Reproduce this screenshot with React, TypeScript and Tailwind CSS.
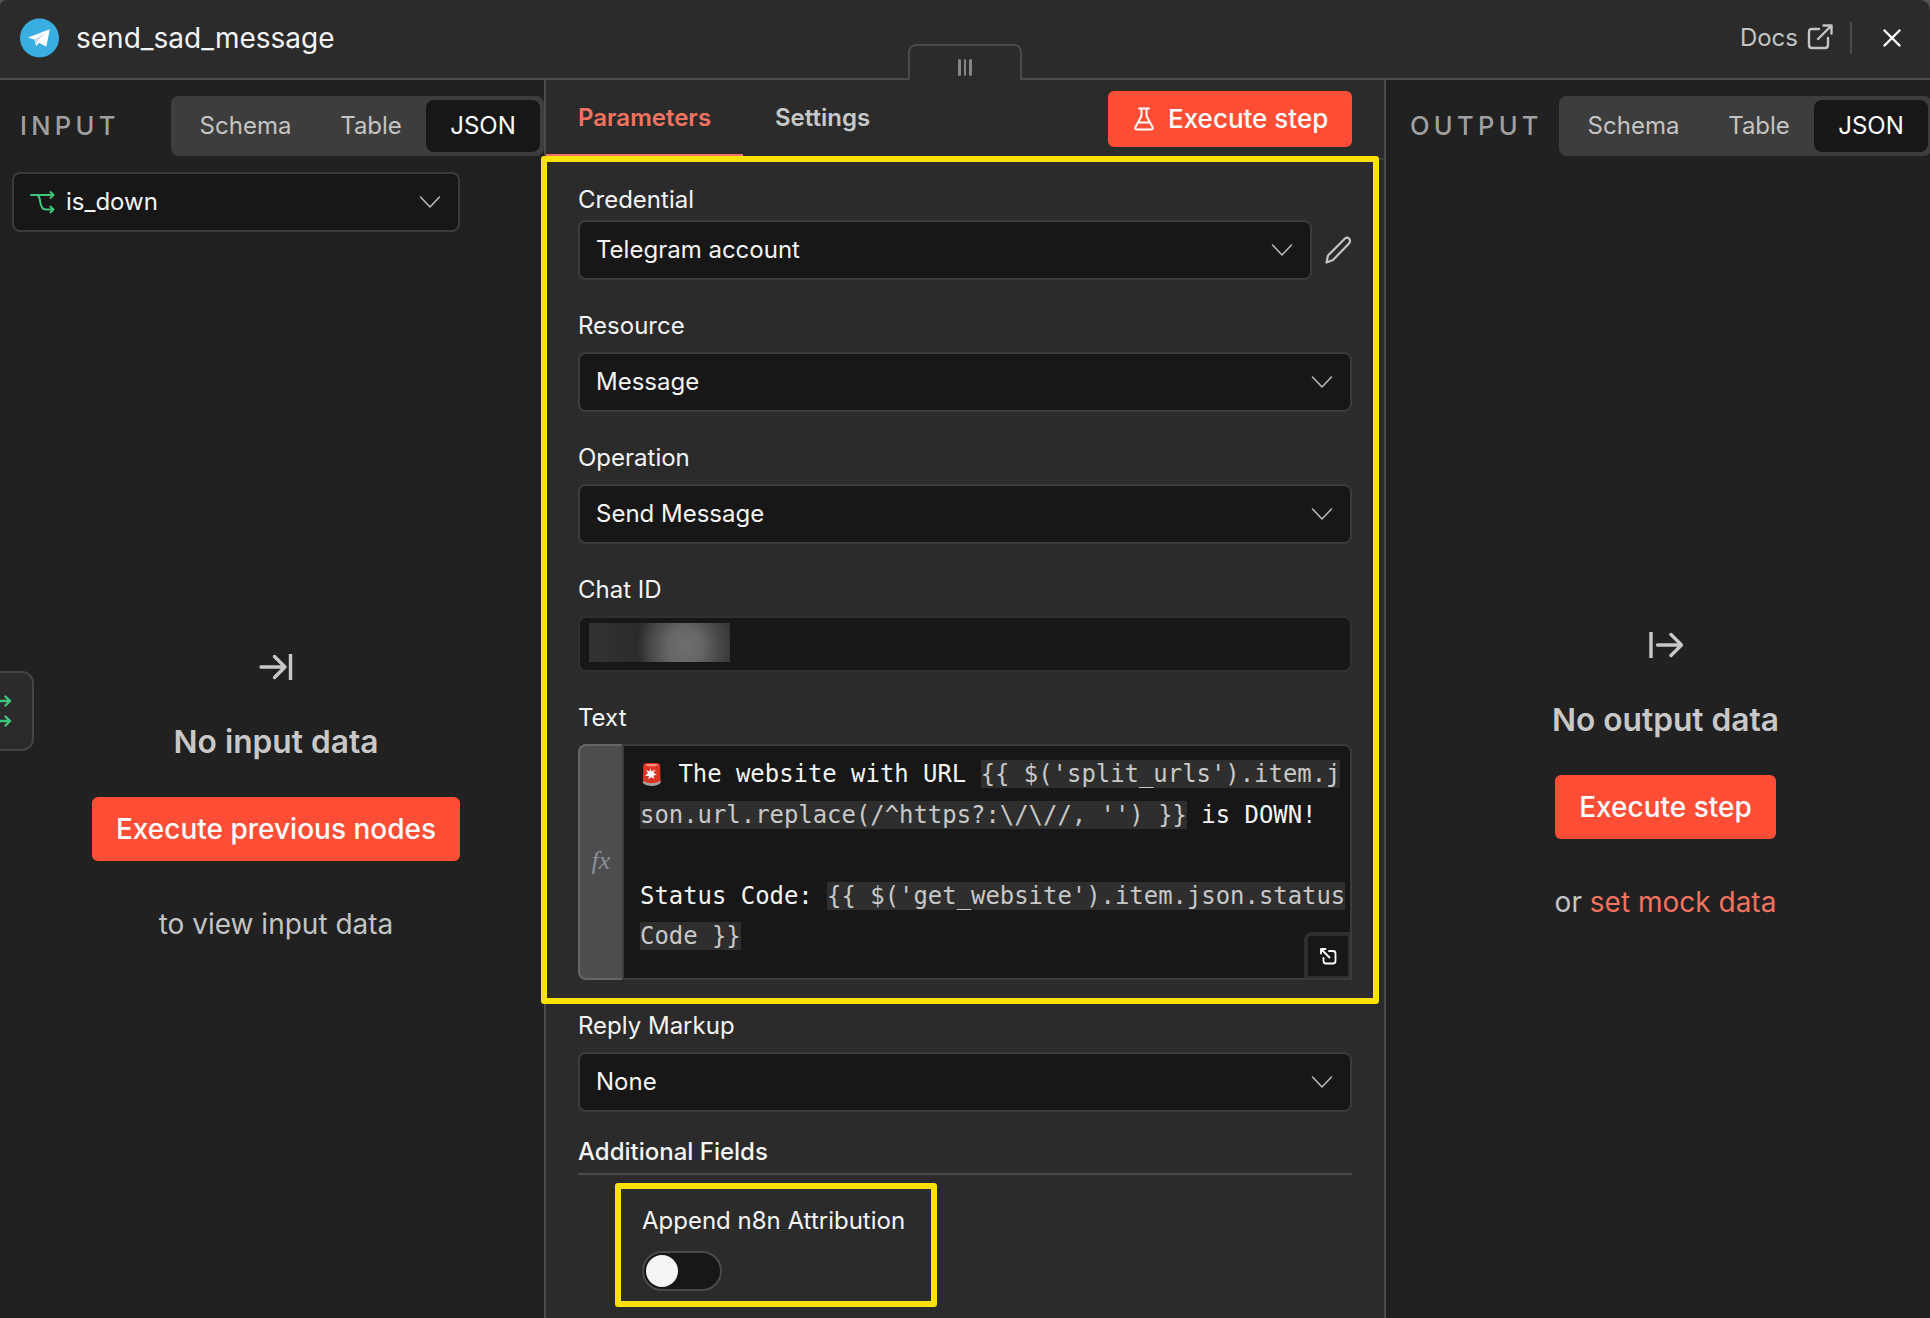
import React from "react";

const Chevron = () => (
  <svg className="shrink-0" width="22" height="14" viewBox="0 0 22 14" fill="none" stroke="#b8b8b8" strokeWidth="1.6" strokeLinecap="round" strokeLinejoin="round">
    <path d="M1.500 2 11 12l9.500-10" />
  </svg>
);

const Telegram = () => (
  <svg width="40" height="40" viewBox="0 0 40 40">
    <circle cx="19.500" cy="20" r="19.500" fill="#3aade1" />
    <path d="M8 19.500 29.800 11.200 26.300 28.800 19 24.800 16.200 28.200 14.500 21.800z" fill="#fff" />
    <path d="M14.500 21.800 26 14.200 17.300 23.300 16.200 28.200z" fill="#c9dcec" />
  </svg>
);

const Branch = () => (
  <svg width="25" height="24" viewBox="0 0 25 24" fill="none" stroke="#3dc67b" strokeWidth="2" strokeLinecap="round" strokeLinejoin="round">
    <path d="M1 5h22M20.500 2 23.500 5l-3 3M7 5c3.500 1 2.500 6 4 10 1 3.500 2.500 4.500 5 4.500h7M20.500 16.500l3 3-3 3" />
  </svg>
);

const Siren = () => (
  <svg className="inline-block align-[-4px]" width="24" height="24" viewBox="0 0 24 24">
    <path d="M3 18h17.500v3q-3 3-8.700 3T3 21z" fill="#a9a3a3" />
    <path d="M3.200 4q.3-3 4-3h9q3.700 0 4 3l.3 15q-8.700 4.500-17.500 0z" fill="#dd3324" />
    <path d="M5 3.500q1-1.500 3-1.500h7.500q2 0 3 1.500-6.500 1.800-13.500 0z" fill="#f48b78" />
    <path d="m10.500 6 1 3.500 4-2-2 3.500 3.500 1.500-3.700 1.200 1.200 3.300-3.500-2-2.500 2.500.3-3.600-3.800-.4 3-2.200-2-3.300 3.500 1.500z" fill="#fff" />
  </svg>
);

const Tabs = () => (
  <div className="flex h-[60px] w-[373px] shrink-0 rounded-lg bg-[#3d3d3d] p-1 text-[24px] text-[#c4c4c4]">
    <div className="flex w-[141px] items-center justify-center">Schema</div>
    <div className="flex w-[110px] items-center justify-center">Table</div>
    <div className="flex flex-1 items-center justify-center rounded-lg bg-[#171717] text-white">JSON</div>
  </div>
);

const Select = ({ value }: { value: string }) => (
  <div className="flex h-[60px] flex-1 items-center justify-between rounded-lg border-2 border-[#3b3b3b] bg-[#171717] pl-4 pr-[17px]">
    <span>{value}</span>
    <Chevron />
  </div>
);

const Label = ({ children }: { children: string }) => (
  <div className="h-8 leading-8 text-[#f5f5f5]">{children}</div>
);

const Code = ({ children }: { children: string }) => (
  <span className="bg-[#2e2e2e] text-[#c8c8c8]">{children}</span>
);

const App = () => {
  return (
    <div className="flex h-[1318px] w-[1930px] flex-col overflow-hidden bg-[#212121] font-['Inter',sans-serif] text-[24px] text-[#f5f5f5]">
      <div className="h-20 shrink-0 bg-[#555]">
        <header className="relative flex h-20 items-center rounded-tl-[6px] rounded-tr-[10px] border-b-2 border-[#4a4a4a] bg-[#2b2b2b] pb-[2px] pl-5 pr-[29px]">
          <Telegram />
          <h1 className="ml-4 flex-1 text-[28px] text-[#f5f5f5]">send_sad_message</h1>
          <span className="text-[24px] text-[#c4c4c4]">Docs</span>
          <svg className="-mt-[3px] ml-[9px]" width="26" height="26" viewBox="0 0 26 26" fill="none" stroke="#c4c4c4" strokeWidth="2.400" strokeLinecap="round" strokeLinejoin="round">
            <path d="M12 5H5q-3 0-3 3v13q0 3 3 3h13q3 0 3-3v-7M16.500 1.500h8v8M24.500 1.500 11 15" />
          </svg>
          <div className="ml-[17px] mr-[1px] h-8 w-[2px] bg-[#4a4a4a]" />
          <svg className="ml-[30px]" width="18" height="18" viewBox="0 0 18 18" fill="none" stroke="#fff" strokeWidth="2.400" strokeLinecap="round">
            <path d="m1.500 1.500 15 15M16.500 1.500l-15 15" />
          </svg>
          {/* drag handle over the header border */}
          <div className="absolute left-[908px] top-11 flex h-[37px] w-[114px] justify-center gap-[3px] rounded-t-lg border-2 border-b-0 border-[#4a4a4a] bg-[#2b2b2b] pt-[13px]">
            <div className="h-[17px] w-[2.500px] rounded bg-[#858585]" />
            <div className="h-[17px] w-[2.500px] rounded bg-[#858585]" />
            <div className="h-[17px] w-[2.500px] rounded bg-[#858585]" />
          </div>
        </header>
      </div>
      <main className="flex flex-1">
        <section className="relative flex w-[544px] shrink-0 flex-col pt-4">
          <div className="flex items-center justify-between">
            <span className="pl-5 text-[25.500px] font-medium tracking-[4.300px] text-[#a0a0a0]">INPUT</span>
            <Tabs />
          </div>
          <div className="ml-3 mt-4 flex h-[60px] w-[448px] items-center rounded-lg border-2 border-[#3b3b3b] bg-[#171717] pl-4 pr-[17px]">
            <Branch />
            <span className="ml-[11px] flex-1">is_down</span>
            <Chevron />
          </div>
          <div className="ml-2 mt-[420px] flex flex-col items-center">
            <svg width="34" height="30" viewBox="0 0 34 30" fill="none" stroke="#c8c8c8" strokeWidth="3.400" strokeLinecap="round" strokeLinejoin="round">
              <path d="M2 15h24M15.500 4.500 26 15 15.500 25.500" />
              <path d="M31.500 2v26" strokeLinecap="butt" />
            </svg>
            <h2 className="mt-9 text-[31.700px] font-semibold leading-[48px] text-[#c8c8c8]">No input data</h2>
            <button className="mt-[31px] h-16 w-[368px] rounded-md bg-[#ff4d36] text-[28px] font-medium text-white">
              Execute previous nodes
            </button>
            <p className="mt-[42px] text-[28px] leading-[42px] text-[#c4c4c4]">to view input data</p>
          </div>
          {/* previous node tab */}
          <div className="absolute left-0 top-[591px] h-20 w-[34px] rounded-r-xl border-2 border-l-0 border-[#454545] bg-[#2b2b2b]">
            <svg width="14" height="76" viewBox="0 0 14 76" fill="none" stroke="#3dc67b" strokeWidth="2.400" strokeLinecap="round" strokeLinejoin="round">
              <path d="M-2 28h12M5.500 23.500 10 28l-4.500 4.500M-2 48h12M5.500 43.500 10 48l-4.500 4.500" />
            </svg>
          </div>
        </section>
        <section className="relative w-[842px] shrink-0 border-x-2 border-[#4a4a4a] bg-[#2b2b2b]">
          <div className="flex h-20 items-start justify-between border-b-2 border-[#3f3f3f] pr-8">
            <div className="flex h-[76px] font-semibold">
              <div className="w-[197px] border-b-2 border-[#f27360] pl-8 pt-5 text-[#f27360]">Parameters</div>
              <div className="pl-8 pt-5 text-[#c8c8c8]">Settings</div>
            </div>
            <button className="mt-[11px] flex h-14 w-[244px] items-center rounded-md bg-[#ff4d36] pl-[26px] text-[26px] font-medium text-white">
              <svg width="20" height="24" viewBox="0 0 20 24" fill="none" stroke="#fff" strokeWidth="2" strokeLinecap="round" strokeLinejoin="round">
                <path d="M5 1.500h10M7.500 1.500V9L1.500 20q-1 2.500 2 2.500h13q3 0 2-2.500L12.500 9V1.500M4.500 15.500h11" />
              </svg>
              <span className="ml-[14px] pb-[1px]">Execute step</span>
            </button>
          </div>
          <div className="pl-8 pr-8 pt-6">
            <Label>Credential</Label>
            <div className="mt-1 flex items-center">
              <Select value="Telegram account" />
              <svg className="ml-[13px]" width="27" height="28" viewBox="0 0 27 28" fill="none" stroke="#c4c4c4" strokeWidth="2.200" strokeLinecap="round" strokeLinejoin="round">
                <path d="M1.500 26.500 3 19.500 19.500 3q2.500-2.500 4.500-.5t0 5L8 24z" />
              </svg>
            </div>
            <div className="mt-[30px]"><Label>Resource</Label></div>
            <div className="mt-[10px] flex"><Select value="Message" /></div>
            <div className="mt-[30px]"><Label>Operation</Label></div>
            <div className="mt-[10px] flex"><Select value="Send Message" /></div>
            <div className="mt-[30px]"><Label>Chat ID</Label></div>
            <div className="mt-[10px] h-14 rounded-lg border-2 border-[#303030] bg-[#171717] pl-[9px] pt-[5px]">
              <div className="h-[39px] w-[141px] bg-[radial-gradient(ellipse_48px_55px_at_68%_62%,#6e6e6e_0%,#666_35%,#4a4a4a_70%,transparent_100%),linear-gradient(90deg,#333,#2b2b2b_35%,#363636)]" />
            </div>
            <div className="mt-[30px]"><Label>Text</Label></div>
            <div className="mt-[10px] flex h-[236px]">
              <div className="flex w-11 items-center justify-center rounded-l-lg border-2 border-r-0 border-[#666] bg-[#4d4d4d] pb-[4px] font-['Liberation_Serif',serif] text-[26px] italic text-[#8b8e99]">
                fx
              </div>
              <div className="relative flex-1 rounded-tr-lg border-2 border-[#3b3b3b] bg-[#171717] pl-4 pt-2 font-['DejaVu_Sans_Mono',monospace] text-[23.920px] leading-[40.500px] whitespace-pre">
                <div><Siren /> The website with URL <Code>{"{{ $('split_urls').item.j"}</Code></div>
                <div><Code>{"son.url.replace(/^https?:\\/\\//, '') }}"}</Code> is DOWN!</div>
                <div> </div>
                <div>Status Code: <Code>{"{{ $('get_website').item.json.status"}</Code></div>
                <div><Code>{"Code }}"}</Code></div>
                <div className="absolute bottom-0 right-0 flex h-[46px] w-[46px] items-center justify-center rounded-tl-lg border-4 border-r-2 border-b-2 border-[#2f2f2f]">
                  <svg width="18" height="18" viewBox="0 0 18 18" fill="none" stroke="#fff" strokeWidth="1.800" strokeLinecap="round" strokeLinejoin="round">
                    <path d="M2 6.500V2h4.500M2 2l8.500 8.500M10 4h4q2.500 0 2.500 2.500V14q0 2.500-2.500 2.500H7Q4.500 16.500 4.500 14v-3" />
                  </svg>
                </div>
              </div>
            </div>
            <div className="mt-[30px]"><Label>Reply Markup</Label></div>
            <div className="mt-[10px] flex"><Select value="None" /></div>
            <div className="mt-6 h-[39px] border-b-2 border-[#4a4a4a] font-medium leading-8">Additional Fields</div>
            <div className="ml-16 mt-[30px]">
              <Label>Append n8n Attribution</Label>
              <div className="mt-[14px] h-10 w-20 rounded-full border-2 border-[#4a4a4a] bg-[#171717] p-[2px]">
                <div className="h-8 w-8 rounded-full bg-[#f5f5f5]" />
              </div>
            </div>
          </div>
          {/* highlight frames */}
          <div className="absolute -left-[5px] top-[76px] h-[848px] w-[838px] rounded-[3px] border-[6px] border-[#ffe10a]" />
          <div className="absolute left-[69px] top-[1103px] h-[124px] w-[322px] rounded-[3px] border-[6px] border-[#ffe10a]" />
        </section>
        <section className="w-[559px] shrink-0 pt-4">
          <div className="flex items-center">
            <span className="w-[173px] pl-6 text-[25.500px] font-medium tracking-[4.300px] text-[#a0a0a0]">OUTPUT</span>
            <Tabs />
          </div>
          <div className="mt-[474px] flex flex-col items-center">
            <svg width="34" height="30" viewBox="0 0 34 30" fill="none" stroke="#c8c8c8" strokeWidth="3.400" strokeLinecap="round" strokeLinejoin="round">
              <path d="M8.500 15h24M22 4.500 32.500 15 22 25.500" />
              <path d="M2 2v26" strokeLinecap="butt" />
            </svg>
            <h2 className="mt-9 text-[31.700px] font-semibold leading-[48px] text-[#c8c8c8]">No output data</h2>
            <button className="mt-[31px] h-16 w-[221px] rounded-md bg-[#ff4d36] text-[28px] font-medium text-white">
              Execute step
            </button>
            <p className="mt-[42px] text-[28px] leading-[42px] text-[#c4c4c4]">
              or <span className="text-[#f27360]">set mock data</span>
            </p>
          </div>
        </section>
      </main>
    </div>
  );
};

export default App;
